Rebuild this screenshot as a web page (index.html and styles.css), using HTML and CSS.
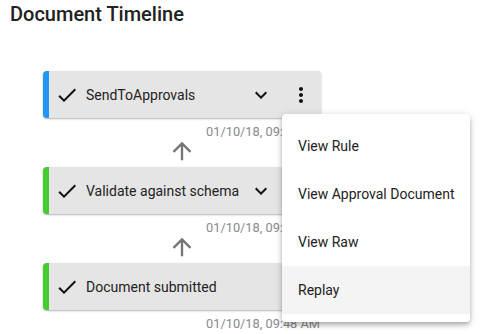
FILE: index.html
```html
<!DOCTYPE html>
<html lang="en">
<head>
  <meta charset="UTF-8" />
  <title>Document Timeline</title>
  <link rel="stylesheet" href="styles.css">
</head>
<body>
  <div class="page">
    <h1>Document Timeline</h1>

    <div class="timeline">
      <div class="step">
        <div class="card card-blue">
          <svg class="check" viewBox="0 0 24 24"><path d="M9 16.17L4.83 12l-1.42 1.41L9 19 21 7l-1.41-1.41z"/></svg>
          <span class="label">SendToApprovals</span>
          <span class="icon-btn"><svg viewBox="0 0 24 24"><path d="M16.59 8.59L12 13.17 7.41 8.59 6 10l6 6 6-6z"/></svg></span>
          <span class="icon-btn"><svg viewBox="0 0 24 24"><path d="M12 8c1.1 0 2-.9 2-2s-.9-2-2-2-2 .9-2 2 .9 2 2 2zm0 2c-1.1 0-2 .9-2 2s.9 2 2 2 2-.9 2-2-.9-2-2-2zm0 6c-1.1 0-2 .9-2 2s.9 2 2 2 2-.9 2-2-.9-2-2-2z"/></svg></span>
        </div>
        <div class="time">01/10/18, 09:48 AM</div>
      </div>

      <div class="arrow"><svg viewBox="0 0 24 24"><path d="M4 12l1.41 1.41L11 7.83V20h2V7.83l5.58 5.59L20 12l-8-8-8 8z"/></svg></div>

      <div class="step">
        <div class="card card-green">
          <svg class="check" viewBox="0 0 24 24"><path d="M9 16.17L4.83 12l-1.42 1.41L9 19 21 7l-1.41-1.41z"/></svg>
          <span class="label">Validate against schema</span>
          <span class="icon-btn"><svg viewBox="0 0 24 24"><path d="M16.59 8.59L12 13.17 7.41 8.59 6 10l6 6 6-6z"/></svg></span>
          <span class="icon-btn"><svg viewBox="0 0 24 24"><path d="M12 8c1.1 0 2-.9 2-2s-.9-2-2-2-2 .9-2 2 .9 2 2 2zm0 2c-1.1 0-2 .9-2 2s.9 2 2 2 2-.9 2-2-.9-2-2-2zm0 6c-1.1 0-2 .9-2 2s.9 2 2 2 2-.9 2-2-.9-2-2-2z"/></svg></span>
        </div>
        <div class="time">01/10/18, 09:48 AM</div>
      </div>

      <div class="arrow"><svg viewBox="0 0 24 24"><path d="M4 12l1.41 1.41L11 7.83V20h2V7.83l5.58 5.59L20 12l-8-8-8 8z"/></svg></div>

      <div class="step">
        <div class="card card-green">
          <svg class="check" viewBox="0 0 24 24"><path d="M9 16.17L4.83 12l-1.42 1.41L9 19 21 7l-1.41-1.41z"/></svg>
          <span class="label">Document submitted</span>
          <span class="icon-btn"></span>
          <span class="icon-btn"><svg viewBox="0 0 24 24"><path d="M12 8c1.1 0 2-.9 2-2s-.9-2-2-2-2 .9-2 2 .9 2 2 2zm0 2c-1.1 0-2 .9-2 2s.9 2 2 2 2-.9 2-2-.9-2-2-2zm0 6c-1.1 0-2 .9-2 2s.9 2 2 2 2-.9 2-2-.9-2-2-2z"/></svg></span>
        </div>
        <div class="time">01/10/18, 09:48 AM</div>
      </div>
    </div>

    <ul class="menu">
      <li>View Rule</li>
      <li>View Approval Document</li>
      <li>View Raw</li>
      <li class="active">Replay</li>
    </ul>
  </div>
</body>
</html>
```

FILE: styles.css
```css
body {
  margin: 0;
  font-family: Roboto, 'Liberation Sans', sans-serif;
  background: #fff;
  color: rgba(0, 0, 0, 0.87);
}

.page {
  position: relative;
  padding: 0 10px;
  height: 334px;
  overflow: hidden;
}

h1 {
  margin: 3px 0 0;
  font-size: 20px;
  font-weight: 500;
  line-height: 23px;
  color: #212121;
}

.timeline {
  width: 278px;
  margin: 45px 0 0 33px;
}

.card {
  display: flex;
  align-items: center;
  height: 47px;
  background: #e5e5e5;
  border-left: 6px solid #4cd137;
  border-radius: 4px;
  box-shadow: 0 1px 2px rgba(0, 0, 0, 0.3);
  padding-left: 6px;
  box-sizing: border-box;
}

.card-blue {
  border-left-color: #2196f3;
}

.card-green {
  border-left-color: #45cc2e;
}

.check {
  width: 24px;
  height: 24px;
  fill: #111;
  flex: none;
}

.label {
  flex: 1;
  min-width: 0;
  margin-left: 7px;
  font-size: 14px;
  color: #222;
  white-space: nowrap;
  overflow: hidden;
}

.icon-btn {
  width: 40px;
  height: 40px;
  display: flex;
  align-items: center;
  justify-content: center;
  flex: none;
}

.icon-btn svg {
  width: 24px;
  height: 24px;
  fill: #111;
}

.time {
  text-align: right;
  padding-top: 8px;
  height: 11px;
  line-height: 11px;
  font-size: 12.8px;
  color: #8a8a8a;
  padding-right: 1px;
}

.arrow {
  height: 28px;
  margin-bottom: 2px;
  display: flex;
  justify-content: center;
}

.arrow svg {
  width: 28px;
  height: 28px;
  fill: #757575;
}

.menu {
  position: absolute;
  left: 282px;
  top: 114px;
  width: 188px;
  margin: 0;
  padding: 8px 0;
  list-style: none;
  background: #fff;
  border-radius: 4px;
  box-shadow: 0 2px 4px -1px rgba(0, 0, 0, 0.2), 0 4px 5px 0 rgba(0, 0, 0, 0.14), 0 1px 10px 0 rgba(0, 0, 0, 0.12);
}

.menu li {
  height: 48px;
  line-height: 48px;
  padding: 0 16px;
  font-size: 14px;
  color: #222;
  white-space: nowrap;
}

.menu li.active {
  background: #f4f4f4;
}
```
